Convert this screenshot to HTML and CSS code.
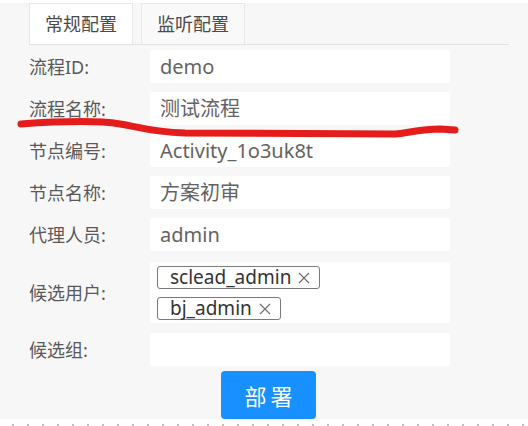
FILE: index.html
```html
<!DOCTYPE html>
<html lang="zh-CN">
<head>
<meta charset="utf-8">
<link rel="stylesheet" href="styles.css">
</head>
<body>
<div class="page">
  <div class="panel">
    <div class="tabs">
      <div class="tab active">常规配置</div>
      <div class="tab">监听配置</div>
    </div>
    <div class="form">
      <div class="row"><div class="label">流程ID:</div><div class="field">demo</div></div>
      <div class="row"><div class="label">流程名称:</div><div class="field">测试流程</div></div>
      <div class="row"><div class="label">节点编号:</div><div class="field">Activity_1o3uk8t</div></div>
      <div class="row"><div class="label">节点名称:</div><div class="field">方案初审</div></div>
      <div class="row"><div class="label">代理人员:</div><div class="field">admin</div></div>
      <div class="row row-tags"><div class="label">候选用户:</div>
        <div class="field tags">
          <span class="tag">sclead_admin<svg class="close" width="12" height="12" viewBox="0 0 12 12"><path d="M1 1L11 11M11 1L1 11" stroke="#6f6f6f" stroke-width="1.2" fill="none"/></svg></span>
          <span class="tag">bj_admin<svg class="close" width="12" height="12" viewBox="0 0 12 12"><path d="M1 1L11 11M11 1L1 11" stroke="#6f6f6f" stroke-width="1.2" fill="none"/></svg></span>
        </div>
      </div>
      <div class="row row-last"><div class="label">候选组:</div><div class="field"></div></div>
    </div>
    <div class="actions"><button class="btn">部署</button></div>
  </div>
  <div class="dots"></div>
  <svg class="mark" width="528" height="426" viewBox="0 0 528 426">
    <path d="M21,124 C50,122 95,120 120,124 C140,127 150,132 185,133 L395,134 C410,133 420,129 440,129 L455,130" fill="none" stroke="#e41c1c" stroke-width="7" stroke-linecap="round" stroke-linejoin="round"/>
  </svg>
</div>
</body>
</html>
```

FILE: styles.css
```css
* { box-sizing: border-box; }
html, body { margin: 0; padding: 0; background: #fff; }
body {
  font-family: "Noto Sans", "Noto Sans CJK SC", sans-serif;
  width: 528px;
  height: 426px;
  overflow: hidden;
}
.page { position: relative; width: 528px; height: 426px; padding-top: 3px; }
.panel {
  background: #f7f7f7;
  height: 416px;
  display: flex;
  flex-direction: column;
}
.tabs {
  display: flex;
  gap: 8px;
  margin-left: 29px;
  width: 480px;
  height: 42px;
  border-bottom: 1px solid #e2e2e2;
}
.tab {
  width: 104px;
  height: 41px;
  border: 1px solid #e8e8e8;
  border-bottom: none;
  background: #f9f9f9;
  color: #4a4a4a;
  font-size: 18px;
  display: flex;
  align-items: center;
  justify-content: center;
  line-height: 1;
}
.tab.active { background: #fff; }
.form {
  display: flex;
  flex-direction: column;
  gap: 9px;
  margin-top: 5px;
}
.row { display: flex; align-items: center; }
.row-tags { margin-top: 2px; }
.row-last { margin-top: 1px; }
.label {
  width: 150px;
  padding-left: 29px;
  font-size: 18px;
  color: #595959;
  line-height: 1;
}
.field {
  width: 300px;
  height: 33px;
  background: #fff;
  border-radius: 3px;
  padding-left: 10px;
  display: flex;
  align-items: center;
  font-size: 20px;
  color: #636363;
  line-height: 1;
}
.field.tags {
  height: 61px;
  flex-direction: column;
  align-items: flex-start;
  justify-content: flex-start;
  padding: 4px 0 0 7px;
  gap: 8px;
}
.tag {
  display: inline-flex;
  align-items: center;
  height: 23px;
  border: 1px solid #7a7a7a;
  border-radius: 3px;
  padding: 0 9px 0 12px;
  font-size: 19px;
  color: #333;
  line-height: 1;
}
.close { margin-left: 7px; display: block; }
.actions { padding-left: 221px; margin-top: 5px; }
.btn {
  width: 95px;
  height: 48px;
  border: none;
  border-radius: 4px;
  background: #1890ff;
  color: #fff;
  font-family: "Noto Sans CJK SC", sans-serif;
  font-size: 22px;
  letter-spacing: 4px;
  text-indent: 4px;
  padding: 0;
  line-height: 1;
}
.dots {
  margin-top: 5px;
  height: 2px;
  background-image: linear-gradient(to right, #bdbdbd 2px, transparent 2px);
  background-size: 15px 2px;
  background-position: 12px 0;
}
.mark { position: absolute; left: 0; top: 0; pointer-events: none; }
```
